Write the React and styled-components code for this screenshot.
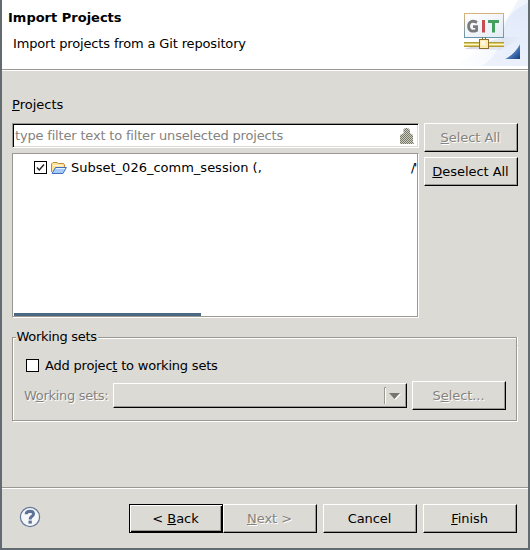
import React from "react";
import styled, { createGlobalStyle, css } from "styled-components";

const FACE = "#dcdad5";
const SHADE = "#9a9890";

const GlobalStyle = createGlobalStyle`
  *, *::before, *::after { box-sizing: border-box; }
  body {
    margin: 0;
    background: ${FACE};
    font: 13px/16px "DejaVu Sans", sans-serif;
    color: #000;
    overflow: hidden;
  }
`;

const Dialog = styled.div`
  width: 530px;
  height: 550px;
  display: flex;
  flex-direction: column;
  background: ${FACE};
  border: 2px solid #626b70;
  border-top: 0;
  white-space: nowrap;
`;

const Header = styled.header`
  height: 71px;
  flex: none;
  display: flex;
  justify-content: space-between;
  background: #fff;
  border-bottom: 1px solid #fff;
  box-shadow: inset 0 -1px ${SHADE};
`;

const Titles = styled.div`
  padding: 10px 0 0 6px;
`;

const Title = styled.h1`
  margin: 0;
  font-size: 13px;
  line-height: 16px;
  font-weight: bold;
`;

const Subtitle = styled.p`
  margin: 10px 0 0 5px;
  letter-spacing: -0.15px;
`;

const Banner = styled.svg`
  display: block;
  width: 76px;
  height: 66px;
`;

const Body = styled.main`
  flex: 1;
  padding: 26px 10px 0;
`;

const Label = styled.span`
  display: block;
  ${(p) => p.$disabled && css`
    color: #85837f;
    text-shadow: 1px 1px #fff;
    letter-spacing: -0.3px;
  `}
`;

const Key = styled.span`
  text-decoration: underline 1px;
  text-underline-offset: 1px;
  text-decoration-skip-ink: none;
`;

const Projects = styled.section`
  display: grid;
  grid-template-columns: 407px 94px;
  column-gap: 5px;
  align-items: start;
  margin-top: 10px;
`;

const Column = styled.div`
  display: flex;
  flex-direction: column;
  gap: 5px;
`;

const Filter = styled.div`
  height: 25px;
  display: flex;
  align-items: center;
  justify-content: space-between;
  padding: 0 4px 0 2px;
  background: #fff;
  border: 1px solid;
  border-color: ${SHADE} #fff #fff ${SHADE};
  box-shadow: inset 1px 1px #000, inset -1px -1px ${FACE};
  color: #85837f;
  letter-spacing: -0.18px;
`;

const Tree = styled.div`
  height: 165px;
  display: flex;
  flex-direction: column;
  justify-content: space-between;
  background: #fff;
  border: 1px solid;
  border-color: ${SHADE} #fff #fff ${SHADE};
  box-shadow: inset -1px -1px ${SHADE};
`;

const TreeRow = styled.div`
  height: 16px;
  margin: 6px 1px 0 21px;
  display: flex;
  align-items: center;
  overflow: hidden;
`;

const TreeName = styled.span`
  flex: none;
  width: 340px;
  margin-left: 4px;
`;

const TreePath = styled.span`
  flex: none;
  letter-spacing: -1.6px;
`;

const ScrollThumb = styled.div`
  width: 187px;
  height: 3px;
  margin: 0 0 1px 1px;
  background: #4b6983;
`;

const CheckBox = styled.span`
  flex: none;
  display: grid;
  place-items: center;
  width: 13px;
  height: 13px;
  margin-bottom: 1px;
  border: 1px solid #000;
  background: #fff;
`;

const Button = styled.button`
  width: 94px;
  height: 29px;
  flex: none;
  padding: 1px 1px 0 0;
  border: 1px solid;
  border-color: #fff #000 #000 #fff;
  box-shadow: inset -1px -1px ${SHADE};
  background: ${FACE};
  font: inherit;
  letter-spacing: -0.05px;
  color: #000;
  &:disabled {
    color: #85837f;
    text-shadow: 1px 1px #fff;
  }
  ${(p) => p.$default && css`
    border-color: #000;
    box-shadow: inset 1px 1px #fff, inset -1px -1px #000, inset -2px -2px ${SHADE};
  `}
`;

const Group = styled.fieldset`
  height: 92px;
  margin: 11px 1px 0 0;
  padding: 0;
  border: 0;
  min-width: 0;
  display: flex;
  flex-direction: column;
`;

const Caption = styled.div`
  display: flex;
  align-items: center;
  height: 16px;
  gap: 1px;
  flex: none;
  letter-spacing: -0.3px;
  &::before, &::after {
    content: "";
    height: 8px;
    align-self: flex-end;
    border-top: 1px solid ${SHADE};
    box-shadow: inset 0 1px #fff;
  }
  &::before {
    width: 4px;
    margin-right: -0.5px;
    border-left: 1px solid ${SHADE};
    box-shadow: inset 1px 1px #fff;
  }
  &::after {
    flex: 1;
    border-right: 1px solid ${SHADE};
    box-shadow: inset 0 1px #fff, 1px 0 #fff;
  }
`;

const GroupBody = styled.div`
  flex: 1;
  border: 1px solid ${SHADE};
  border-top: 0;
  box-shadow: inset 1px 0 #fff, 1px 1px #fff;
  padding: 13px 10px 0 13px;
`;

const CheckLine = styled.div`
  display: flex;
  align-items: center;
  gap: 6px;
  height: 16px;
  letter-spacing: -0.2px;
`;

const SetLine = styled.div`
  display: flex;
  align-items: center;
  height: 29px;
  margin: 7px 0 0 -2px;
`;

const Combo = styled.div`
  width: 294px;
  height: 25px;
  margin: 0 5px 0 auto;
  display: flex;
  justify-content: flex-end;
  border: 1px solid;
  border-color: #fff #000 #000 #fff;
  box-shadow: inset -1px -1px ${SHADE};
`;

const Footer = styled.footer`
  height: 61px;
  flex: none;
  display: flex;
  align-items: flex-start;
  border-top: 1px solid ${SHADE};
  box-shadow: inset 0 1px #fff;
  padding: 16px 11px 0 17px;
`;

const Actions = styled.div`
  display: flex;
  gap: 6px;
  margin-left: auto;
`;

const Pair = styled.div`
  display: flex;
`;

const GitBanner = () => (
  <Banner viewBox="452 0 76 66">
    <defs>
      <linearGradient id="sky" x1="0" y1="0" x2="1" y2="0">
        <stop offset="0" stopColor="#fff" />
        <stop offset=".6" stopColor="#f5f8fe" />
        <stop offset="1" stopColor="#edf2fc" />
      </linearGradient>
      <linearGradient id="arc" x1="0" y1="0" x2="0" y2="1">
        <stop offset="0" stopColor="#dce6f9" />
        <stop offset="1" stopColor="#e9effb" />
      </linearGradient>
      <linearGradient id="tri" x1="0" y1="0" x2="1" y2="1">
        <stop offset=".35" stopColor="#c0d6f0" />
        <stop offset=".6" stopColor="#4775b5" />
        <stop offset="1" stopColor="#103c80" />
      </linearGradient>
      <linearGradient id="frame" x1="0" y1="0" x2="0" y2="1">
        <stop offset="0" stopColor="#d8b27c" />
        <stop offset="1" stopColor="#6795ac" />
      </linearGradient>
      <linearGradient id="screen" x1="0" y1="0" x2="1" y2="1">
        <stop offset="0" stopColor="#fff" />
        <stop offset="1" stopColor="#e3ebf4" />
      </linearGradient>
      <linearGradient id="haze">
        <stop offset="0" stopColor="#b9b5cb" stopOpacity=".65" />
        <stop offset="1" stopColor="#c9cbe1" stopOpacity="0" />
      </linearGradient>
    </defs>
    <path d="M528 0V66H452Q492 48 518 0Z" fill="url(#sky)" />
    <path d="M528 3Q506 12 503 32Q500 54 482 66H528Z" fill="url(#arc)" opacity=".75" />
    <path d="M464 49L504 37H524L500 50Z" fill="url(#haze)" />
    <path d="M520 44V59H505Q515 54 520 44Z" fill="url(#tri)" />
    <rect x="464.5" y="13.5" width="39" height="24" fill="url(#screen)" stroke="url(#frame)" />
    <g fill="none" strokeWidth="3">
      <path d="M477 22.4C472 19.8 468.6 22 468.6 26.2C468.6 30.5 472 32.4 476.6 30.4V26.6H473" stroke="#7b7b7b" strokeWidth="2.8" />
      <path d="M483.5 20V32.5" stroke="#c64b52" />
      <path d="M488 21.5H499M493.5 21V32.5" stroke="#45a060" />
    </g>
    <path d="M482.5 37V41M485.5 37V41" stroke="#687b43" />
    <path d="M464 42.5H504M464 46.5H504" stroke="#b19c35" />
    <path d="M464 43.5H504M464 45.5H504" stroke="#d9cb68" />
    <path d="M464 44.5H504" stroke="#fff6c8" />
    <rect x="479.5" y="39.5" width="9" height="9" fill="#ffeab0" stroke="#8c702a" />
    <rect x="481" y="41" width="4" height="4" fill="#fff7df" />
  </Banner>
);

const ClearIcon = () => (
  <svg width="14" height="16" viewBox="0 0 14 16">
    <defs>
      <pattern id="dither" width="2" height="2" patternUnits="userSpaceOnUse">
        <rect width="2" height="2" fill="#d0cfbf" />
        <path d="M0 0h1v1H0zM1 1h1v1H1z" fill="#74766a" />
      </pattern>
    </defs>
    <path d="M3 2L5 0H8L10 2V5L13 7V14L14 16H0V7L4 5Z" fill="url(#dither)" />
  </svg>
);

const FolderIcon = () => (
  <svg width="16" height="14" viewBox="0 0 16 14">
    <path d="M0.5 11V3L2 1.5H6L7.5 2.5H12.5L13.5 4V6" fill="#ffe39a" stroke="#c08c3c" />
    <path d="M2 4.5H12" stroke="#fff6d4" />
    <path d="M1 12.5L4.5 6.5H15.4L12 12.5Z" fill="#a4cbfb" stroke="#426fc0" />
    <path d="M5 7.5H14" stroke="#e4f1ff" />
  </svg>
);

const HelpIcon = () => (
  <svg width="22" height="22" viewBox="0 0 22 22">
    <circle cx="11" cy="11" r="9.6" fill="#f5f6f9" stroke="#63799c" strokeWidth="1.2" />
    <path d="M7.2 8.2Q7.2 5.4 11 5.3Q14.5 5.4 14.5 8Q14.5 9.6 12.6 10.6Q11.1 11.4 11.1 13.4" fill="none" stroke="#5b7196" strokeWidth="3" />
    <rect x="9.5" y="14.6" width="3.3" height="3" fill="#5b7196" />
  </svg>
);

const FolderSlot = styled.span`
  display: flex;
  flex: none;
  margin: 0 0 1px 4px;
`;

const HelpSlot = styled.span`
  display: flex;
  margin-top: 2px;
`;

export default function App() {
  return (
    <>
      <GlobalStyle />
      <Dialog>
        <Header>
          <Titles>
            <Title>Import Projects</Title>
            <Subtitle>Import projects from a Git repository</Subtitle>
          </Titles>
          <GitBanner />
        </Header>
        <Body>
          <Label><Key>P</Key>rojects</Label>
          <Projects>
            <Column>
              <Filter>
                type filter text to filter unselected projects
                <ClearIcon />
              </Filter>
              <Tree>
                <TreeRow>
                  <CheckBox>
                    <svg width="9" height="9" viewBox="0 0 9 9">
                      <path d="M1 4.5L3.3 7L8 1.5" fill="none" stroke="#222" strokeWidth="1.4" />
                    </svg>
                  </CheckBox>
                  <FolderSlot><FolderIcon /></FolderSlot>
                  <TreeName>Subset_026_comm_session (,</TreeName>
                  <TreePath>/'</TreePath>
                </TreeRow>
                <ScrollThumb />
              </Tree>
            </Column>
            <Column>
              <Button disabled><Key>S</Key>elect All</Button>
              <Button><Key>D</Key>eselect All</Button>
            </Column>
          </Projects>
          <Group>
            <Caption>Working sets</Caption>
            <GroupBody>
              <CheckLine>
                <CheckBox />
                <span>Add projec<Key>t</Key> to working sets</span>
              </CheckLine>
              <SetLine>
                <Label $disabled>W<Key>o</Key>rking sets:</Label>
                <Combo>
                  <svg width="23" height="23" viewBox="0 0 23 23">
                    <path d="M1.5 20V3.5H3" fill="none" stroke={SHADE} />
                    <path d="M2.5 4V20" stroke="#fff" />
                    <path d="M7 10H18L12.5 16Z" fill="#fff" />
                    <path d="M6 9H17L11.5 15Z" fill="#777570" />
                  </svg>
                </Combo>
                <Button disabled>S<Key>e</Key>lect...</Button>
              </SetLine>
            </GroupBody>
          </Group>
        </Body>
        <Footer>
          <HelpSlot><HelpIcon /></HelpSlot>
          <Actions>
            <Pair>
              <Button $default>&lt; <Key>B</Key>ack</Button>
              <Button disabled><Key>N</Key>ext &gt;</Button>
            </Pair>
            <Button>Cancel</Button>
            <Button><Key>F</Key>inish</Button>
          </Actions>
        </Footer>
      </Dialog>
    </>
  );
}
